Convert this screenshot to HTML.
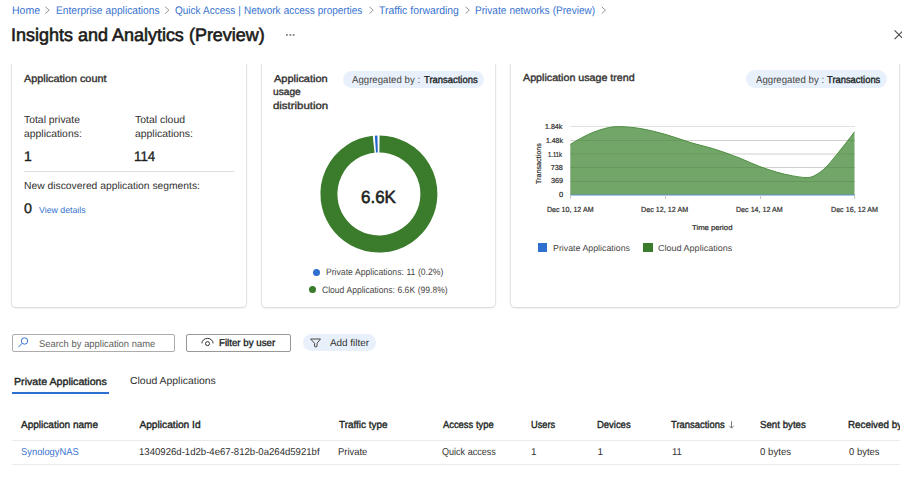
<!DOCTYPE html>
<html><head><meta charset="utf-8">
<style>
html,body{margin:0;padding:0;background:#fff;width:902px;height:497px;overflow:hidden;position:relative;font-family:"Liberation Sans",sans-serif;color:#323130}
.t{position:absolute;white-space:nowrap;line-height:1;transform-origin:0 0;text-rendering:geometricPrecision}
.card{position:absolute;background:#fff;border-radius:4px;box-shadow:0 0 1.2px 0.5px rgba(0,0,0,0.09),0 0.6px 2.4px rgba(0,0,0,0.09)}
.clip{position:absolute;left:0;top:64px;width:902px;height:433px;overflow:hidden}
.pill{position:absolute;border-radius:9px;background:#e8f1fb}
.sq{position:absolute}
</style></head><body>
<div class="clip">
  <div class="card" style="left:11.6px;width:234.2px;top:-40px;height:283px"></div>
  <div class="card" style="left:261.5px;width:233.6px;top:-40px;height:283px"></div>
  <div class="card" style="left:510.9px;width:388.1px;top:-40px;height:283px"></div>
</div>
<div class="pill" style="left:342.5px;top:70.5px;width:141px;height:17.5px"></div>
<div class="pill" style="left:746.3px;top:70.3px;width:140.6px;height:17.7px"></div>
<div style="position:absolute;left:12px;top:334px;width:161px;height:16px;border:1px solid #aeacaa;border-radius:2px"></div>
<div style="position:absolute;left:186.2px;top:334.2px;width:102.5px;height:15.5px;border:1px solid #9a9896;border-radius:2px"></div>
<div class="pill" style="left:302.8px;top:334.2px;width:72.8px;height:17px"></div>
<div style="position:absolute;left:11.8px;top:392px;width:97.6px;height:2px;background:#2b6fd0"></div>
<div style="position:absolute;left:24.4px;top:171px;width:210px;height:1px;background:#e1dfdd"></div>
<div style="position:absolute;left:11.6px;top:440px;width:888px;height:1px;background:#edebe9"></div>
<div style="position:absolute;left:11.6px;top:464px;width:888px;height:1px;background:#edebe9"></div>
<div style="position:absolute;left:313px;top:268.5px;width:7px;height:7px;border-radius:50%;background:#2f6fcf"></div>
<div style="position:absolute;left:309.3px;top:285.8px;width:7px;height:7px;border-radius:50%;background:#3b7b2c"></div>
<div class="sq" style="left:537.8px;top:243px;width:9.7px;height:9.4px;background:#2f6fcf"></div>
<div class="sq" style="left:642.9px;top:243px;width:9.8px;height:9.4px;background:#3b7b2c"></div>
<svg style="position:absolute;left:0;top:0" width="902" height="497">
  <g fill="none" stroke="#8a8886" stroke-width="0.9">
    <path d="M45.4,6.8 L49.2,10.2 L45.4,13.6"/>
    <path d="M165.1,6.8 L168.9,10.2 L165.1,13.6"/>
    <path d="M369.4,6.8 L373.2,10.2 L369.4,13.6"/>
    <path d="M465.5,6.8 L469.3,10.2 L465.5,13.6"/>
    <path d="M601.7,6.8 L605.5,10.2 L601.7,13.6"/>
  </g>
  <g fill="#858381"><rect x="286" y="34" width="1.8" height="1.8"/><rect x="289.5" y="34" width="1.8" height="1.8"/><rect x="292.8" y="34" width="1.8" height="1.8"/></g>
  <path d="M894.6,30.4 L903.4,39.2 M903.4,30.4 L894.6,39.2" stroke="#484644" stroke-width="1.1"/>
  <path d="M379.49,144.00 A50,50 0 1 1 373.68,144.27" fill="none" stroke="#3b7b2c" stroke-width="17"/>
  <path d="M375.39,144.12 A50,50 0 0 1 377.61,144.02" fill="none" stroke="#2566cc" stroke-width="17"/>
  <g stroke="#e3e1df" stroke-width="1">
    <line x1="570" y1="126.5" x2="855" y2="126.5"/>
    <line x1="570" y1="140.5" x2="855" y2="140.5"/>
    <line x1="570" y1="154" x2="855" y2="154"/>
    <line x1="570" y1="167.5" x2="855" y2="167.5"/>
    <line x1="570" y1="181.5" x2="855" y2="181.5"/>
  </g>
  <path d="M570.3,195 L570.3,144.3 C578.0,139.8 585.6,135.2 593.3,132.3 C601.4,129.2 609.6,126.6 617.7,126.6 C626.2,126.6 634.6,127.5 643.1,129.0 C650.4,130.3 657.7,132.3 665.0,134.3 C674.3,136.9 683.7,140.6 693.0,143.3 C699.5,145.2 705.9,146.5 712.4,148.4 C721.6,151.2 730.8,154.6 740.0,158.2 C746.6,160.8 753.1,164.1 759.7,166.5 C770.7,170.6 781.8,174.0 792.8,175.9 C797.6,176.7 802.3,177.6 807.1,177.6 C812.5,177.6 817.8,174.2 823.2,169.8 C827.9,165.9 832.6,159.5 837.3,153.9 C843.0,147.0 848.8,139.4 854.5,131.8 L854.5,195 Z" fill="#5f9a53" fill-opacity="0.88"/>
  <g stroke="#000" stroke-opacity="0.07" stroke-width="1">
    <line x1="570" y1="140.5" x2="855" y2="140.5"/>
    <line x1="570" y1="154" x2="855" y2="154"/>
    <line x1="570" y1="167.5" x2="855" y2="167.5"/>
    <line x1="570" y1="181.5" x2="855" y2="181.5"/>
  </g>
  <path d="M570.3,144.3 C578.0,139.8 585.6,135.2 593.3,132.3 C601.4,129.2 609.6,126.6 617.7,126.6 C626.2,126.6 634.6,127.5 643.1,129.0 C650.4,130.3 657.7,132.3 665.0,134.3 C674.3,136.9 683.7,140.6 693.0,143.3 C699.5,145.2 705.9,146.5 712.4,148.4 C721.6,151.2 730.8,154.6 740.0,158.2 C746.6,160.8 753.1,164.1 759.7,166.5 C770.7,170.6 781.8,174.0 792.8,175.9 C797.6,176.7 802.3,177.6 807.1,177.6 C812.5,177.6 817.8,174.2 823.2,169.8 C827.9,165.9 832.6,159.5 837.3,153.9 C843.0,147.0 848.8,139.4 854.5,131.8" fill="none" stroke="#4f8f43" stroke-width="1"/>
  <line x1="570" y1="195" x2="855" y2="195" stroke="#5b8fc9" stroke-width="1"/>
  <g stroke="#c8c6c4" stroke-width="1">
    <line x1="570.5" y1="195" x2="570.5" y2="199"/>
    <line x1="665.5" y1="195" x2="665.5" y2="199"/>
    <line x1="760.5" y1="195" x2="760.5" y2="199"/>
    <line x1="854.5" y1="195" x2="854.5" y2="199"/>
  </g>
  <circle cx="24.5" cy="341" r="3.2" fill="none" stroke="#3a75d0" stroke-width="1"/>
  <line x1="22.2" y1="343.3" x2="18.3" y2="347.2" stroke="#3a75d0" stroke-width="1"/>
  <path d="M201.9,343.4 A5.6,5 0 0 1 213.1,343.4" fill="none" stroke="#323130" stroke-width="1"/>
  <circle cx="207.5" cy="343.6" r="2" fill="none" stroke="#323130" stroke-width="1"/>
  <path d="M310.6,339 L320.5,339 L317,343.3 L317,346.5 Q315.8,347.5 314.6,346.5 L314.6,343.3 Z" fill="none" stroke="#484644" stroke-width="1" stroke-linejoin="round"/>
  <path d="M731.5,421.2 L731.5,428 M729.3,425.8 L731.5,428.2 L733.7,425.8" fill="none" stroke="#605e5c" stroke-width="0.8"/>
</svg>
<div style="position:absolute;left:0;top:0;width:899.5px;height:497px;overflow:hidden">
<div class="t" style="left:11.66px;top:6px;font-size:11.03px;color:#3773cf;transform:scaleX(0.9559);">Home</div>
<div class="t" style="left:55.78px;top:6px;font-size:11.03px;color:#3773cf;transform:scaleX(0.9264);word-spacing:0.27px;">Enterprise applications</div>
<div class="t" style="left:175.35px;top:6px;font-size:11.03px;color:#3773cf;transform:scaleX(0.9058);word-spacing:0.35px;">Quick Access | Network access properties</div>
<div class="t" style="left:379.39px;top:6px;font-size:11.03px;color:#3773cf;transform:scaleX(0.9432);word-spacing:0.21px;">Traffic forwarding</div>
<div class="t" style="left:475.09px;top:6px;font-size:11.03px;color:#3773cf;transform:scaleX(0.9130);word-spacing:0.32px;">Private networks (Preview)</div>
<div class="t" style="left:11.38px;top:26px;font-size:18.16px;color:#1b1a19;-webkit-text-stroke:0.6px #1b1a19;transform:scaleX(0.9888);word-spacing:0.10px;">Insights and Analytics (Preview)</div>
<div class="t" style="left:24.40px;top:75px;font-size:10.34px;color:#323130;-webkit-text-stroke:0.36px #323130;transform:scaleX(1.0501);word-spacing:-0.12px;">Application count</div>
<div class="t" style="left:24.19px;top:116px;font-size:10.34px;color:#323130;transform:scaleX(1.0059);">Total private</div>
<div class="t" style="left:23.98px;top:130px;font-size:10.34px;color:#323130;transform:scaleX(1.0061);">applications:</div>
<div class="t" style="left:135.19px;top:116px;font-size:10.34px;color:#323130;transform:scaleX(1.0138);">Total cloud</div>
<div class="t" style="left:134.98px;top:130px;font-size:10.34px;color:#323130;transform:scaleX(1.0079);">applications:</div>
<div class="t" style="left:24.02px;top:150px;font-size:13.97px;color:#201f1e;-webkit-text-stroke:0.36px #201f1e;">1</div>
<div class="t" style="left:134.47px;top:150px;font-size:13.97px;color:#201f1e;-webkit-text-stroke:0.36px #201f1e;transform:scaleX(0.9509);">114</div>
<div class="t" style="left:23.77px;top:182px;font-size:10.20px;color:#323130;transform:scaleX(1.0121);">New discovered application segments:</div>
<div class="t" style="left:24.17px;top:202px;font-size:13.83px;color:#201f1e;-webkit-text-stroke:0.36px #201f1e;transform:scaleX(1.0330);">0</div>
<div class="t" style="left:38.50px;top:206px;font-size:8.80px;color:#3773cf;transform:scaleX(0.9965);">View details</div>
<div class="t" style="left:273.90px;top:75px;font-size:10.06px;color:#323130;-webkit-text-stroke:0.36px #323130;transform:scaleX(1.0915);">Application</div>
<div class="t" style="left:273.29px;top:88px;font-size:10.06px;color:#323130;-webkit-text-stroke:0.36px #323130;transform:scaleX(1.0135);">usage</div>
<div class="t" style="left:273.44px;top:102px;font-size:10.06px;color:#323130;-webkit-text-stroke:0.36px #323130;transform:scaleX(1.1346);">distribution</div>
<div class="t" style="left:352.00px;top:76px;font-size:10.06px;color:#484644;transform:scaleX(0.9583);word-spacing:0.14px;">Aggregated by :</div>
<div class="t" style="left:423.81px;top:76px;font-size:10.06px;color:#201f1e;-webkit-text-stroke:0.36px #201f1e;transform:scaleX(0.9381);">Transactions</div>
<div class="t" style="left:360.65px;top:189px;font-size:17.60px;color:#201f1e;-webkit-text-stroke:0.6px #201f1e;transform:scaleX(0.9630);">6.6K</div>
<div class="t" style="left:325.91px;top:268px;font-size:9.22px;color:#484644;transform:scaleX(0.9354);word-spacing:0.20px;">Private Applications: 11 (0.2%)</div>
<div class="t" style="left:322.07px;top:286px;font-size:9.22px;color:#484644;transform:scaleX(0.9273);word-spacing:0.22px;">Cloud Applications: 6.6K (99.8%)</div>
<div class="t" style="left:523.30px;top:74px;font-size:10.20px;color:#323130;-webkit-text-stroke:0.36px #323130;transform:scaleX(1.0510);word-spacing:-0.12px;">Application usage trend</div>
<div class="t" style="left:755.80px;top:76px;font-size:10.06px;color:#484644;transform:scaleX(0.9583);word-spacing:0.14px;">Aggregated by :</div>
<div class="t" style="left:827.41px;top:76px;font-size:10.06px;color:#201f1e;-webkit-text-stroke:0.36px #201f1e;transform:scaleX(0.9328);">Transactions</div>
<div class="t" style="left:545.10px;top:123px;font-size:7.26px;color:#323130;-webkit-text-stroke:0.22px #323130;transform:scaleX(0.9755);">1.84k</div>
<div class="t" style="left:545.52px;top:137px;font-size:7.26px;color:#323130;-webkit-text-stroke:0.22px #323130;transform:scaleX(0.9524);">1.48k</div>
<div class="t" style="left:548.49px;top:151px;font-size:7.26px;color:#323130;-webkit-text-stroke:0.22px #323130;transform:scaleX(0.8102);">1.11k</div>
<div class="t" style="left:550.64px;top:164px;font-size:7.26px;color:#323130;-webkit-text-stroke:0.22px #323130;">738</div>
<div class="t" style="left:550.78px;top:177px;font-size:7.26px;color:#323130;-webkit-text-stroke:0.22px #323130;transform:scaleX(0.9948);">369</div>
<div class="t" style="left:558.57px;top:191px;font-size:7.26px;color:#323130;-webkit-text-stroke:0.22px #323130;transform:scaleX(1.0401);">0</div>
<div class="t" style="left:546.84px;top:206px;font-size:7.40px;color:#323130;-webkit-text-stroke:0.22px #323130;transform:scaleX(0.9528);word-spacing:0.12px;">Dec 10, 12 AM</div>
<div class="t" style="left:641.43px;top:206px;font-size:7.40px;color:#323130;-webkit-text-stroke:0.22px #323130;transform:scaleX(0.9672);word-spacing:0.09px;">Dec 12, 12 AM</div>
<div class="t" style="left:736.33px;top:206px;font-size:7.40px;color:#323130;-webkit-text-stroke:0.22px #323130;transform:scaleX(0.9576);word-spacing:0.11px;">Dec 14, 12 AM</div>
<div class="t" style="left:831.13px;top:206px;font-size:7.40px;color:#323130;-webkit-text-stroke:0.22px #323130;transform:scaleX(0.9624);word-spacing:0.10px;">Dec 16, 12 AM</div>
<div class="t" style="left:692.45px;top:224px;font-size:7.26px;color:#323130;-webkit-text-stroke:0.22px #323130;transform:scaleX(1.0669);word-spacing:-0.11px;">Time period</div>
<div class="t" style="left:553.09px;top:244px;font-size:8.66px;color:#484644;transform:scaleX(1.0190);">Private Applications</div>
<div class="t" style="left:657.55px;top:244px;font-size:8.66px;color:#484644;transform:scaleX(1.0444);word-spacing:-0.08px;">Cloud Applications</div>
<div class="t" style="left:38.82px;top:340px;font-size:9.78px;color:#605e5c;transform:scaleX(0.9614);word-spacing:0.13px;">Search by application name</div>
<div class="t" style="left:219.22px;top:339px;font-size:9.92px;color:#201f1e;-webkit-text-stroke:0.36px #201f1e;transform:scaleX(0.9774);word-spacing:0.09px;">Filter by user</div>
<div class="t" style="left:329.90px;top:339px;font-size:9.92px;color:#323130;">Add filter</div>
<div class="t" style="left:13.75px;top:378px;font-size:10.20px;color:#201f1e;-webkit-text-stroke:0.36px #201f1e;transform:scaleX(1.0458);word-spacing:-0.10px;">Private Applications</div>
<div class="t" style="left:129.78px;top:377px;font-size:10.20px;color:#323130;transform:scaleX(1.0236);">Cloud Applications</div>
<div class="t" style="left:20.70px;top:421px;font-size:10.20px;color:#201f1e;-webkit-text-stroke:0.36px #201f1e;transform:scaleX(0.9840);word-spacing:0.07px;">Application name</div>
<div class="t" style="left:139.40px;top:421px;font-size:10.20px;color:#201f1e;-webkit-text-stroke:0.36px #201f1e;">Application Id</div>
<div class="t" style="left:338.80px;top:421px;font-size:10.20px;color:#201f1e;-webkit-text-stroke:0.36px #201f1e;transform:scaleX(0.9735);word-spacing:0.10px;">Traffic type</div>
<div class="t" style="left:442.50px;top:421px;font-size:10.20px;color:#201f1e;-webkit-text-stroke:0.36px #201f1e;transform:scaleX(0.9181);word-spacing:0.28px;">Access type</div>
<div class="t" style="left:530.55px;top:421px;font-size:10.20px;color:#201f1e;-webkit-text-stroke:0.36px #201f1e;transform:scaleX(0.9096);">Users</div>
<div class="t" style="left:596.94px;top:421px;font-size:10.20px;color:#201f1e;-webkit-text-stroke:0.36px #201f1e;transform:scaleX(0.9273);">Devices</div>
<div class="t" style="left:671.46px;top:421px;font-size:10.20px;color:#201f1e;-webkit-text-stroke:0.36px #201f1e;transform:scaleX(0.9260);">Transactions</div>
<div class="t" style="left:759.71px;top:421px;font-size:10.20px;color:#201f1e;-webkit-text-stroke:0.36px #201f1e;transform:scaleX(0.9484);word-spacing:0.18px;">Sent bytes</div>
<div class="t" style="left:848.41px;top:421px;font-size:10.20px;color:#201f1e;-webkit-text-stroke:0.36px #201f1e;transform:scaleX(0.9645);word-spacing:0.13px;">Received bytes</div>
<div class="t" style="left:20.53px;top:448px;font-size:9.92px;color:#3773cf;transform:scaleX(0.9447);">SynologyNAS</div>
<div class="t" style="left:139.23px;top:448px;font-size:9.92px;color:#323130;transform:scaleX(0.9671);">1340926d-1d2b-4e67-812b-0a264d5921bf</div>
<div class="t" style="left:338.25px;top:448px;font-size:9.92px;color:#323130;transform:scaleX(0.9488);">Private</div>
<div class="t" style="left:442.14px;top:448px;font-size:9.92px;color:#323130;transform:scaleX(0.9097);word-spacing:0.30px;">Quick access</div>
<div class="t" style="left:531.01px;top:448px;font-size:9.92px;color:#323130;">1</div>
<div class="t" style="left:597.51px;top:448px;font-size:9.92px;color:#323130;">1</div>
<div class="t" style="left:671.83px;top:448px;font-size:9.92px;color:#323130;transform:scaleX(0.9622);">11</div>
<div class="t" style="left:759.81px;top:448px;font-size:9.92px;color:#323130;transform:scaleX(0.9682);word-spacing:0.11px;">0 bytes</div>
<div class="t" style="left:848.92px;top:448px;font-size:9.92px;color:#323130;transform:scaleX(0.9473);word-spacing:0.18px;">0 bytes</div>
</div>
<div class="t" style="left:518px;top:160px;font-size:7.2px;transform:rotate(-90deg);transform-origin:center;width:42px;text-align:center;color:#323130;-webkit-text-stroke:0.2px #323130">Transactions</div>
</body></html>
